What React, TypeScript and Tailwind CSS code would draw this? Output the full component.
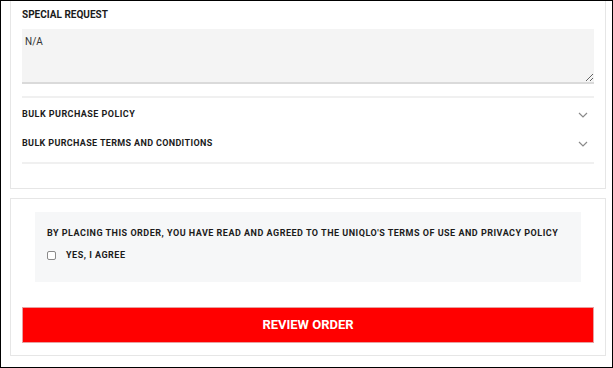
import React from "react";

const font = { fontFamily: "Roboto, 'Liberation Sans', sans-serif" };

function Chevron() {
  return (
    <svg width="10" height="6" viewBox="0 0 10 6" className="shrink-0">
      <polyline points="1,1 5,5 9,1" fill="none" stroke="#8a8a8a" strokeWidth="1.2" />
    </svg>
  );
}

export default function App() {
  return (
    <div
      className="w-[613px] h-[368px] border border-black bg-white overflow-hidden pl-[9px] pr-[6px]"
      style={font}
    >
      {/* request card, top edge scrolled out of view */}
      <div className="border border-t-0 border-[#e6e6e6] px-[11px] pt-[8px] pb-[24px]">
        <p className="text-[10px] font-bold tracking-[0px] text-[#1b1b1b] leading-[12px]">
          SPECIAL REQUEST
        </p>
        <textarea
          readOnly
          defaultValue="N/A"
          className="mt-[8px] block w-full h-[55px] bg-[#f4f4f4] border-0 border-b-2 border-[#dadada] px-[3px] py-[5px] text-[10px] text-[#333] outline-none"
        />
        <div className="mt-[12px] border-t-2 border-[#f0f0f0]">
          <div className="flex items-center justify-between h-[32px] pt-[2px]">
            <span className="text-[9px] font-bold tracking-[0.45px] text-[#1b1b1b]">
              BULK PURCHASE POLICY
            </span>
            <span className="pr-[6px]"><Chevron /></span>
          </div>
          <div className="flex items-center justify-between h-[28px]">
            <span className="text-[9px] font-bold tracking-[0.35px] text-[#1b1b1b]">
              BULK PURCHASE TERMS AND CONDITIONS
            </span>
            <span className="pr-[6px]"><Chevron /></span>
          </div>
        </div>
        <div className="mt-[4px] border-t-2 border-[#f0f0f0]" />
      </div>

      {/* agreement card */}
      <div className="mt-[9px] border border-[#e6e6e6] px-[11px] pt-[13px] pb-[12px]">
        <div className="mx-[13px] bg-[#f6f7f8] px-[12px] pt-[15px] pb-[21px]">
          <p className="text-[9px] font-bold tracking-[0.5px] text-[#1b1b1b] leading-[12px] whitespace-nowrap">
            BY PLACING THIS ORDER, YOU HAVE READ AND AGREED TO THE UNIQLO'S TERMS OF USE AND PRIVACY POLICY
          </p>
          <label className="mt-[10px] flex items-center gap-[10px]">
            <span className="w-[9px] h-[9px] rounded-[2px] border border-[#8a8a8a] bg-white" />
            <span className="text-[9px] font-bold tracking-[0.5px] text-[#1b1b1b] leading-[12px]">
              YES, I AGREE
            </span>
          </label>
        </div>
        <button className="mt-[25px] w-full h-[36px] bg-[#ff0000] border border-[#e8a0a0] text-white text-[13px] font-bold tracking-[0px] flex items-center justify-center">
          REVIEW ORDER
        </button>
      </div>
    </div>
  );
}
